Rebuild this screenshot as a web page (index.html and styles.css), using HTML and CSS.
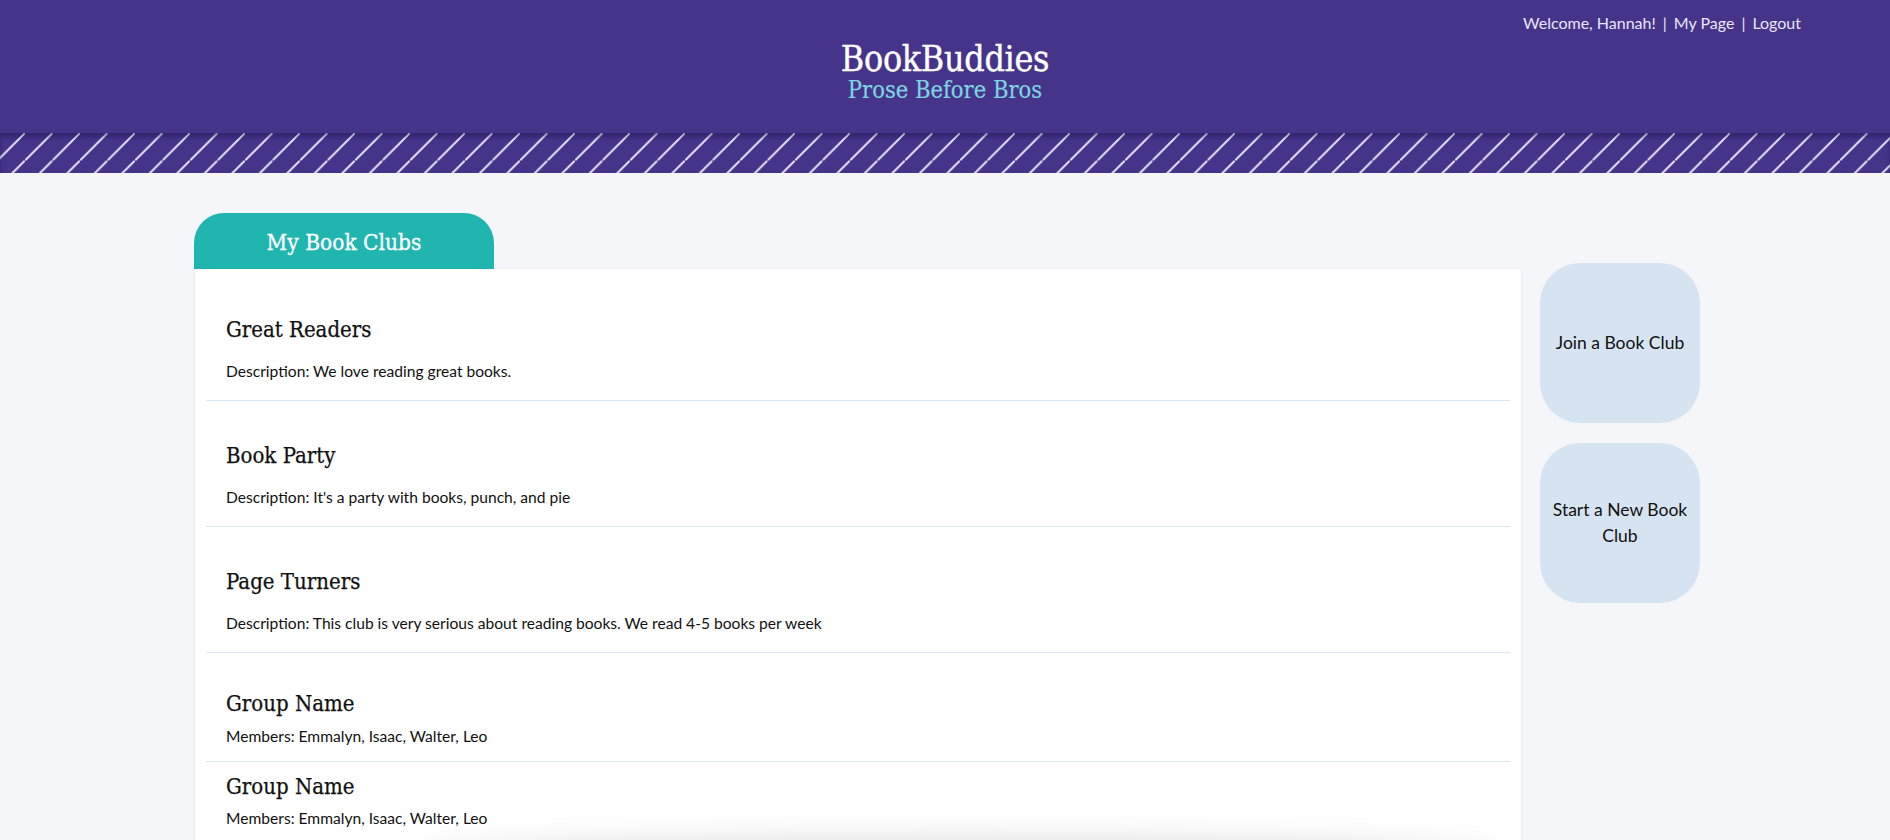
FILE: index.html
```html
<!DOCTYPE html>
<html lang="en">
<head>
<meta charset="utf-8">
<title>BookBuddies</title>
<link rel="stylesheet" href="styles.css">
</head>
<body>
<header class="site-header">
  <nav class="user-nav">
    <a href="#">Welcome, Hannah!</a><span class="sep">|</span><a href="#">My Page</a><span class="sep">|</span><a href="#">Logout</a>
  </nav>
  <div class="brand">
    <h1 class="brand-title">BookBuddies</h1>
    <p class="brand-tagline">Prose Before Bros</p>
  </div>
</header>
<div class="stripes"></div>

<main class="main">
  <section class="clubs">
    <div class="tab">My Book Clubs</div>
    <div class="card">
      <article class="club">
        <h3 class="club-name">Great Readers</h3>
        <p class="club-desc">Description: We love reading great books.</p>
      </article>
      <article class="club">
        <h3 class="club-name">Book Party</h3>
        <p class="club-desc">Description: It's a party with books, punch, and pie</p>
      </article>
      <article class="club">
        <h3 class="club-name">Page Turners</h3>
        <p class="club-desc">Description: This club is very serious about reading books. We read 4-5 books per week</p>
      </article>
      <article class="group group-first">
        <h3 class="club-name">Group Name</h3>
        <p class="club-desc">Members: Emmalyn, Isaac, Walter, Leo</p>
      </article>
      <article class="group">
        <h3 class="club-name">Group Name</h3>
        <p class="club-desc">Members: Emmalyn, Isaac, Walter, Leo</p>
      </article>
    </div>
  </section>
  <aside class="actions">
    <a class="action" href="#">Join a Book Club</a>
    <a class="action" href="#">Start a New Book Club</a>
  </aside>
</main>
<div class="bottom-shadow"></div>
</body>
</html>
```
FILE: styles.css
```css
* { box-sizing: border-box; }

html, body {
  margin: 0;
  padding: 0;
}

body {
  background: #f5f6fa;
  font-family: Lato, "Open Sans", sans-serif;
  color: #111;
  overflow-x: hidden;
}

a { color: inherit; text-decoration: none; }

.site-header {
  background: #46348a;
  height: 133px;
  display: flex;
  flex-direction: column;
}

.user-nav {
  display: flex;
  justify-content: flex-end;
  align-items: center;
  padding: 13px 89px 0 0;
  font-size: 16px;
  line-height: 20px;
  color: #e6e6f8;
}

.user-nav .sep {
  margin: 0 7px;
}

.brand {
  text-align: center;
  margin-top: 9px;
}

.brand-title {
  margin: 0;
  font-family: "DejaVu Serif Condensed", "DejaVu Serif", serif;
  font-weight: normal;
  font-size: 35.5px;
  line-height: 34px;
  color: #ffffff;
  letter-spacing: -0.3px;
  -webkit-text-stroke: 0.4px #ffffff;
}

.brand-tagline {
  margin: 3px 0 0;
  font-family: "DejaVu Serif Condensed", "DejaVu Serif", serif;
  font-size: 23.5px;
  line-height: 22px;
  color: #7fd3e2;
  -webkit-text-stroke: 0.2px #7fd3e2;
}

.stripes {
  height: 40px;
  background-color: #46348a;
  background-image: linear-gradient(135deg,
    transparent calc(50% - 1.1px),
    #d9def4 calc(50% - 1.1px),
    #d9def4 calc(50% + 1.1px),
    transparent calc(50% + 1.1px));
  background-size: 27.5px 27.5px;
  background-position: -2.5px 0;
  box-shadow: inset 0 4px 4px rgba(20, 10, 60, 0.35);
}

.main {
  width: 1506px;
  margin: 40px auto 0;
  padding-left: 4px;
  box-sizing: content-box;
  display: flex;
  gap: 18px;
  align-items: flex-start;
}

.clubs {
  width: 1328px;
  display: flex;
  flex-direction: column;
}

.tab {
  width: 300px;
  height: 56px;
  background: #21b5b0;
  border-radius: 30px 30px 0 0;
  display: flex;
  align-items: center;
  justify-content: center;
  color: #ffffff;
  font-family: "DejaVu Serif Condensed", "DejaVu Serif", serif;
  font-size: 22.5px;
  padding-top: 2px;
  -webkit-text-stroke: 0.3px #ffffff;
}

.card {
  background: #ffffff;
  border: 1px solid #eceef3;
  border-top: none;
  box-shadow: 0 0 3px rgba(0, 0, 0, 0.04);
  padding: 6px 11px 40px;
}

.club, .group {
  border-bottom: 1px solid #d9e5f0;
  padding-left: 20px;
}

.club-name {
  margin: 0;
  font-family: "DejaVu Serif Condensed", "DejaVu Serif", serif;
  font-weight: normal;
  font-size: 22px;
  line-height: 28px;
  color: #111;
  -webkit-text-stroke: 0.25px #111;
}

.club-desc {
  margin: 0;
  font-size: 15.6px;
  line-height: 20px;
  color: #111;
}

.club {
  padding-top: 41px;
  padding-bottom: 19px;
}

.club .club-desc { margin-top: 17px; }

.group {
  padding-top: 11px;
  padding-bottom: 20px;
}

.group .club-desc { margin-top: 7px; }

.group-first {
  padding-top: 37px;
  padding-bottom: 15px;
}

.group-first .club-desc { margin-top: 8px; }

.actions {
  width: 160px;
  margin-top: 50px;
  display: flex;
  flex-direction: column;
  gap: 20px;
}

.action {
  height: 160px;
  border-radius: 40px;
  background: #d6e4f2;
  display: flex;
  align-items: center;
  justify-content: center;
  text-align: center;
  padding: 0 12px;
  font-size: 17.5px;
  line-height: 26px;
  color: #111;
}

.bottom-shadow {
  position: fixed;
  left: 420px;
  width: 1080px;
  height: 40px;
  bottom: -44px;
  border-radius: 50%;
  box-shadow: 0 -6px 30px rgba(0, 0, 0, 0.13);
  pointer-events: none;
}
```
